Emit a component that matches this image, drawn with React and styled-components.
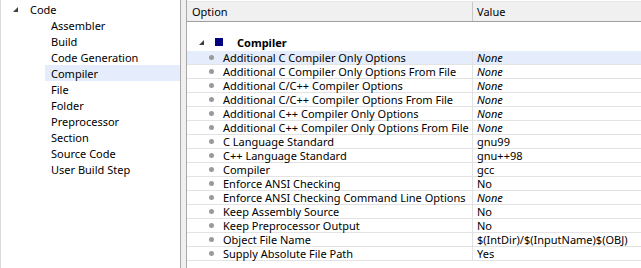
import React from "react";
import styled, { createGlobalStyle } from "styled-components";

const GlobalStyle = createGlobalStyle`
  body {
    margin: 0;
    background: #ffffff;
    font-family: "Noto Sans", "Liberation Sans", sans-serif;
    font-size: 11px;
    color: #000000;
  }
`;

const Window = styled.div`
  display: flex;
  width: 641px;
  height: 268px;
  overflow: hidden;
  background: #ffffff;
`;

const TreePanel = styled.div`
  width: 179px;
  border-left: 1px solid #d9d9d9;
  padding-top: 1px;
  display: flex;
  flex-direction: column;
`;

const TreeRow = styled.div`
  display: flex;
  align-items: center;
  height: 16px;
  padding-left: ${(p) => p.indent}px;
  margin-left: ${(p) => (p.selected ? 44 : 0)}px;
  background: ${(p) => (p.selected ? "#e5ecfb" : "transparent")};
  white-space: nowrap;
`;

const Expander = styled.span`
  width: 0;
  height: 0;
  border-left: 5px solid transparent;
  border-bottom: 5px solid #404040;
  margin-right: ${(p) => p.gap}px;
  margin-left: ${(p) => p.offset}px;
`;

const Splitter = styled.div`
  width: 5px;
  background: #f0f0f0;
  border-left: 1px solid #a9a9a9;
  border-right: 1px solid #a9a9a9;
`;

const Grid = styled.div`
  flex: 1;
  display: flex;
  flex-direction: column;
  padding-top: 1px;
  min-width: 0;
`;

const HeaderRow = styled.div`
  display: grid;
  grid-template-columns: 286px 1fr;
  height: 19px;
  background: #f0f0f0;
  border-top: 1px solid #e6e6e6;
  border-bottom: 1px solid #9e9e9e;
`;

const HeaderCell = styled.div`
  display: flex;
  align-items: center;
  padding-left: ${(p) => p.pad}px;
  border-right: ${(p) => (p.divider ? "1px solid #c8c8c8" : "none")};
`;

const Spacer = styled.div`
  height: 11px;
`;

const CategoryRow = styled.div`
  display: flex;
  align-items: center;
  height: 18px;
  font-weight: 700;
`;

const CategoryIcon = styled.span`
  width: 8px;
  height: 8px;
  background: #000080;
  margin-right: 14px;
`;

const Row = styled.div`
  display: grid;
  grid-template-columns: 286px 1fr;
  height: 13px;
  border-bottom: 1px solid #e3e3e3;
  background: ${(p) => (p.selected ? "#e5ecfb" : "transparent")};
  line-height: 13px;
  white-space: nowrap;
`;

const NameCell = styled.div`
  display: flex;
  align-items: center;
  overflow-x: clip;
  overflow-y: visible;
  border-right: 1px solid #e3e3e3;
`;

const Bullet = styled.span`
  width: 5px;
  height: 5px;
  border-radius: 50%;
  background: #9a9a9a;
  margin-left: 22px;
  margin-right: 9px;
  flex-shrink: 0;
`;

const ValueCell = styled.div`
  padding-left: 4px;
  font-style: ${(p) => (p.italic ? "italic" : "normal")};
  overflow-x: clip;
  overflow-y: visible;
`;

const treeItems = [
  "Assembler",
  "Build",
  "Code Generation",
  "Compiler",
  "File",
  "Folder",
  "Preprocessor",
  "Section",
  "Source Code",
  "User Build Step",
];

const options = [
  ["Additional C Compiler Only Options", "None", true],
  ["Additional C Compiler Only Options From File", "None", true],
  ["Additional C/C++ Compiler Options", "None", true],
  ["Additional C/C++ Compiler Options From File", "None", true],
  ["Additional C++ Compiler Only Options", "None", true],
  ["Additional C++ Compiler Only Options From File", "None", true],
  ["C Language Standard", "gnu99"],
  ["C++ Language Standard", "gnu++98"],
  ["Compiler", "gcc"],
  ["Enforce ANSI Checking", "No"],
  ["Enforce ANSI Checking Command Line Options", "None", true],
  ["Keep Assembly Source", "No"],
  ["Keep Preprocessor Output", "No"],
  ["Object File Name", "$(IntDir)/$(InputName)$(OBJ)"],
  ["Supply Absolute File Path", "Yes"],
];

export default function App() {
  return (
    <>
      <GlobalStyle />
      <Window>
        <TreePanel>
          <TreeRow indent={0}>
            <Expander offset={12} gap={12} />
            Code
          </TreeRow>
          {treeItems.map((t) => (
            <TreeRow key={t} indent={t === "Compiler" ? 6 : 50} selected={t === "Compiler"}>
              {t}
            </TreeRow>
          ))}
        </TreePanel>
        <Splitter />
        <Grid>
          <HeaderRow>
            <HeaderCell pad={5} divider>Option</HeaderCell>
            <HeaderCell pad={4}>Value</HeaderCell>
          </HeaderRow>
          <Spacer />
          <CategoryRow>
            <Expander offset={12} gap={11} />
            <CategoryIcon />
            Compiler
          </CategoryRow>
          {options.map(([name, value, italic], i) => (
            <Row key={name} selected={i === 0}>
              <NameCell>
                <Bullet />
                {name}
              </NameCell>
              <ValueCell italic={italic}>{value}</ValueCell>
            </Row>
          ))}
        </Grid>
      </Window>
    </>
  );
}
